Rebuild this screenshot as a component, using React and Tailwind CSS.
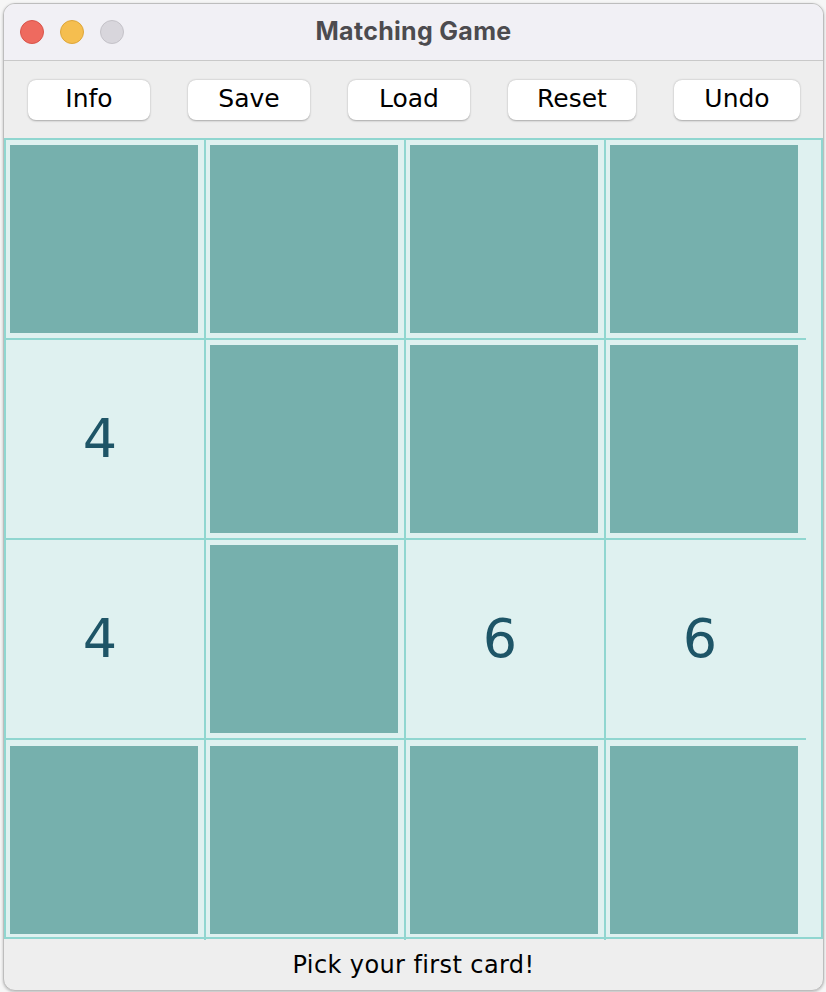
const buttons = [
  { label: "Info", w: "w-[122px]" },
  { label: "Save", w: "w-[122px]" },
  { label: "Load", w: "w-[122px]" },
  { label: "Reset", w: "w-[128px]" },
  { label: "Undo", w: "w-[126px]" },
];

// null = face down card, number = revealed
const board = [
  [null, null, null, null],
  [4, null, null, null],
  [4, null, 6, 6],
  [null, null, null, null],
];

function Cell({ value, col, lastRow }) {
  const rightBorder = col < 3 ? "border-r-2" : "";
  const bottomBorder = lastRow ? "" : "border-b-2";
  return (
    <div className={`h-[200px] w-[200px] ${rightBorder} ${bottomBorder} border-[#90d6d0] flex items-center pl-[4px] pb-[1px]`}>
      {value === null ? (
        <div className="w-[188px] h-[188px] bg-[#76b0ad]" />
      ) : (
        <div className="w-[180px] text-center text-[54px] leading-none text-[#1e5567] font-['DejaVu_Sans',sans-serif]">
          {value}
        </div>
      )}
    </div>
  );
}

export default function App() {
  return (
    <div className="w-[826px] h-[992px] bg-[#f6f6f6] pt-[3px] pl-[3px]">
      <div className="w-[821px] h-[988px] rounded-[12px] border border-[#bdbdbd] bg-[#eeeeee] overflow-hidden flex flex-col shadow-[0_1px_3px_rgba(0,0,0,0.25)]">
        {/* title bar */}
        <div className="relative h-[57px] bg-[#f1f0f5] border-b border-[#c9c9c9] flex items-center justify-center shrink-0">
          <div className="absolute left-[16px] top-[16px] flex gap-[16px]">
            <span className="w-[24px] h-[24px] rounded-full bg-[#ee6a5f] border border-[#d9544a]" />
            <span className="w-[24px] h-[24px] rounded-full bg-[#f5be4f] border border-[#dea63a]" />
            <span className="w-[24px] h-[24px] rounded-full bg-[#d8d6dc] border border-[#c4c2c8]" />
          </div>
          <span className="text-[25px] font-bold text-[#4c4b4f] font-['Inter',sans-serif] tracking-[0.3px]">
            Matching Game
          </span>
        </div>

        {/* toolbar */}
        <div className="h-[77px] flex items-center pl-[24px] gap-[38px] shrink-0">
          {buttons.map((b) => (
            <button
              key={b.label}
              className={`${b.w} h-[40px] pb-[3px] rounded-[8px] bg-white shadow-[0_0.5px_2px_rgba(0,0,0,0.3)] text-[25px] leading-none text-black font-['DejaVu_Sans',sans-serif]`}
            >
              {b.label}
            </button>
          ))}
        </div>

        {/* board */}
        <div className="border-2 border-[#90d6d0] bg-[#dff1f0] h-[801px] shrink-0">
          {board.map((row, r) => (
            <div key={r} className="flex">
              {row.map((v, c) => (
                <Cell key={c} value={v} col={c} lastRow={r === 3} />
              ))}
            </div>
          ))}
        </div>

        {/* status */}
        <div className="flex-1 flex items-center justify-center text-[24px] tracking-[0.4px] text-black font-['DejaVu_Sans',sans-serif]">
          Pick your first card!
        </div>
      </div>
    </div>
  );
}
